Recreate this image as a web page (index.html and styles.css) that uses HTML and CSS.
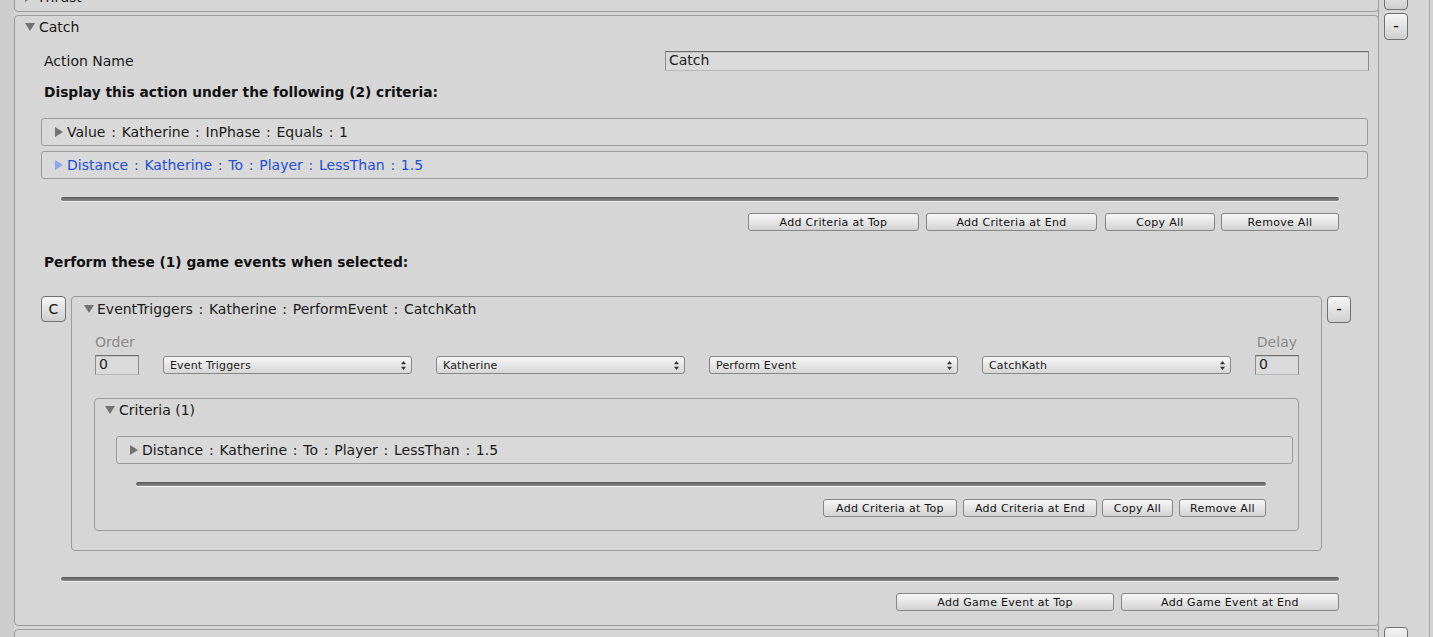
FILE: index.html
```html
<!DOCTYPE html>
<html lang="en">
<head>
<meta charset="utf-8">
<title>Catch action</title>
<link rel="stylesheet" href="styles.css">
</head>
<body>
<div class="list">

  <div class="row">
    <section class="foldout short">
      <div class="fo-head"><svg class="tri-r" width="8" height="10" viewBox="0 0 8 10"><path d="M0 0L8 5L0 10Z"/></svg><span>Thrust</span></div>
    </section>
    <div class="side"><button class="minus">&ndash;</button></div>
  </div>

  <div class="row">
    <section class="foldout">
      <div class="fo-head"><svg class="tri-d" width="10" height="8" viewBox="0 0 10 8"><path d="M0 0H10L5 8Z"/></svg><span>Catch</span></div>
      <div class="fo-body">
        <div class="field-row">
          <label class="field-label">Action Name</label>
          <div class="text-field">Catch</div>
        </div>
        <div class="heading">Display this action under the following (2) criteria:</div>
        <div class="crit-list">
          <div class="crit"><svg class="tri-r" width="8" height="10" viewBox="0 0 8 10"><path d="M0 0L8 5L0 10Z"/></svg><span class="path">Value : Katherine : InPhase : Equals : 1</span></div>
          <div class="crit selected"><svg class="tri-r" width="8" height="10" viewBox="0 0 8 10"><path d="M0 0L8 5L0 10Z"/></svg><span class="path">Distance : Katherine : To : Player : LessThan : 1.5</span></div>
        </div>
        <div class="sep"></div>
        <div class="btn-row">
          <button class="btn w-top">Add Criteria at Top</button>
          <button class="btn w-end">Add Criteria at End</button>
          <button class="btn w-copy">Copy All</button>
          <button class="btn w-remove">Remove All</button>
        </div>
        <div class="heading gap-head">Perform these (1) game events when selected:</div>

        <div class="event-row">
          <button class="sq">C</button>
          <div class="event-panel">
            <div class="ev-head"><svg class="tri-d" width="10" height="8" viewBox="0 0 10 8"><path d="M0 0H10L5 8Z"/></svg><span class="path">EventTriggers : Katherine : PerformEvent : CatchKath</span></div>
            <div class="ev-body">
              <div class="labels"><span>Order</span><span>Delay</span></div>
              <div class="fields">
                <div class="num-field">0</div>
                <div class="dropdown"><span>Event Triggers</span><svg width="5" height="9" viewBox="0 0 5 9"><path d="M2.5 0L5 3.2H0Z M0 5.8H5L2.5 9Z"/></svg></div>
                <div class="dropdown"><span>Katherine</span><svg width="5" height="9" viewBox="0 0 5 9"><path d="M2.5 0L5 3.2H0Z M0 5.8H5L2.5 9Z"/></svg></div>
                <div class="dropdown"><span>Perform Event</span><svg width="5" height="9" viewBox="0 0 5 9"><path d="M2.5 0L5 3.2H0Z M0 5.8H5L2.5 9Z"/></svg></div>
                <div class="dropdown"><span>CatchKath</span><svg width="5" height="9" viewBox="0 0 5 9"><path d="M2.5 0L5 3.2H0Z M0 5.8H5L2.5 9Z"/></svg></div>
                <div class="num-field">0</div>
              </div>
              <div class="sub-panel">
                <div class="sub-head"><svg class="tri-d" width="10" height="8" viewBox="0 0 10 8"><path d="M0 0H10L5 8Z"/></svg><span>Criteria (1)</span></div>
                <div class="sub-body">
                  <div class="crit"><svg class="tri-r" width="8" height="10" viewBox="0 0 8 10"><path d="M0 0L8 5L0 10Z"/></svg><span class="path">Distance : Katherine : To : Player : LessThan : 1.5</span></div>
                  <div class="sep sub-sep"></div>
                  <div class="btn-row sub-btns">
                    <button class="btn s-top">Add Criteria at Top</button>
                    <button class="btn s-end">Add Criteria at End</button>
                    <button class="btn s-copy">Copy All</button>
                    <button class="btn s-remove">Remove All</button>
                  </div>
                </div>
              </div>
            </div>
          </div>
          <button class="minus">&ndash;</button>
        </div>

        <div class="sep sep-low"></div>
        <div class="btn-row">
          <button class="btn w-game">Add Game Event at Top</button>
          <button class="btn w-game">Add Game Event at End</button>
        </div>
      </div>
    </section>
    <div class="side"><button class="minus">&ndash;</button></div>
  </div>

  <div class="row">
    <section class="foldout short">
      <div class="fo-head low"><svg class="tri-r" width="8" height="10" viewBox="0 0 8 10"><path d="M0 0L8 5L0 10Z"/></svg><span>Release</span></div>
    </section>
    <div class="side"><button class="minus">&ndash;</button></div>
  </div>

</div>
</body>
</html>
```

FILE: styles.css
```css
* { box-sizing: border-box; }

html, body {
  margin: 0;
  height: 100%;
}

body {
  font-family: "DejaVu Sans", Verdana, sans-serif;
  font-size: 14px;
  color: #1a1a1a;
  overflow: hidden;
  background:
    linear-gradient(to right, #cdcdcd 0 14px, transparent 14px),
    linear-gradient(to right, transparent 1378px, #9c9c9c 1378px 1379px, transparent 1379px),
    linear-gradient(to right, transparent 1429px, #a9a9a9 1429px 1430px, #d2d2d2 1430px),
    #d6d6d6;
}

.list {
  display: flex;
  flex-direction: column;
  gap: 3px;
  margin-top: -15px;
  padding-left: 14px;
}

.row {
  display: flex;
  align-items: flex-start;
}

.foldout {
  width: 1365px;
  flex: none;
  border: 1px solid #9b9b9b;
  border-radius: 4px;
  background: #d6d6d6;
}

.foldout.short { height: 27px; }

.side {
  padding-left: 5px;
  margin-top: -2px;
}

svg.tri-d, svg.tri-r { flex: none; fill: #727272; }

.fo-head {
  display: flex;
  align-items: center;
  height: 22px;
  padding-left: 10px;
  gap: 4px;
}

.fo-head.low { padding-top: 4px; height: 26px; }

.path { word-spacing: 1.3px; }

.fo-body {
  padding: 0 10px 14px 26px;
}

.field-row {
  display: flex;
  align-items: center;
  height: 20px;
  margin-top: 13px;
}

.field-label {
  width: 624px;
  flex: none;
  padding-left: 3px;
  line-height: 18px;
}

.text-field {
  flex: 1;
  height: 20px;
  line-height: 17px;
  padding-left: 3px;
  margin-right: -1px;
  background: #dadada;
  border: 1px solid;
  border-color: #6e6e6e #8d8d8d #b6b6b6 #8d8d8d;
  box-shadow: inset 0 1px 0 #c4c4c4;
}

.heading {
  margin-top: 11px;
  line-height: 20px;
  font-size: 13.75px;
  font-weight: bold;
  padding-left: 3px;
  color: #111;
}

.heading.gap-head { margin-top: 21px; }

.crit-list {
  margin-top: 16px;
  display: flex;
  flex-direction: column;
  gap: 5px;
}

.crit {
  height: 28px;
  display: flex;
  align-items: center;
  gap: 4px;
  padding-left: 13px;
  padding-bottom: 1px;
  border: 1px solid #9a9a9a;
  border-radius: 3px;
  background: #d9d9d9;
}

.crit.selected { color: #1f4fd6; }
.crit.selected svg.tri-r { fill: #8ea6e8; }

.sep {
  height: 4px;
  margin: 18px 29px 0 20px;
  border-radius: 2px;
  background: linear-gradient(#585858, #8c8c8c);
  box-shadow: 0 1px 0 #efefef;
}

.sep.sep-low { margin-top: 26px; }

.btn-row {
  display: flex;
  justify-content: flex-end;
  margin-top: 12px;
  margin-right: 29px;
}

.btn {
  height: 18px;
  padding: 1px 0 0;
  font-family: "DejaVu Sans", Verdana, sans-serif;
  font-size: 11px;
  letter-spacing: 0.3px;
  line-height: 16px;
  color: #111;
  border: 1px solid #868686;
  border-radius: 3px;
  background: linear-gradient(#f7f7f7, #d3d3d3);
  flex: none;
}

.w-top { width: 171px; }
.w-end { width: 171px; margin-left: 7px; }
.w-copy { width: 110px; margin-left: 8px; }
.w-remove { width: 118px; margin-left: 6px; }
.w-game { width: 218px; }
.w-game + .w-game { margin-left: 7px; }

.event-row {
  display: flex;
  align-items: flex-start;
  gap: 5px;
  margin-top: 24px;
  margin-right: 17px;
}

.sq, .minus {
  flex: none;
  padding: 0;
  font-family: "DejaVu Sans", Verdana, sans-serif;
  color: #111;
  border: 1px solid #6f6f6f;
  border-radius: 4px;
  background: linear-gradient(#f6f6f6, #cfcfcf);
}

.sq {
  width: 25px;
  height: 26px;
  font-size: 14px;
}

.minus {
  width: 24px;
  height: 27px;
  font-size: 11px;
  font-weight: bold;
}

.event-panel {
  flex: 1;
  border: 1px solid #9b9b9b;
  border-radius: 4px;
}

.ev-head {
  display: flex;
  align-items: center;
  gap: 3px;
  height: 24px;
  padding-left: 12px;
}

.ev-body {
  padding: 0 22px 19px 23px;
}

.labels {
  display: flex;
  justify-content: space-between;
  margin-top: 12px;
  line-height: 18px;
  color: #8a8a8a;
  padding-right: 2px;
}

.fields {
  display: flex;
  align-items: center;
  gap: 24px;
  height: 20px;
  margin-top: 4px;
}

.num-field {
  width: 44px;
  height: 20px;
  flex: none;
  line-height: 17px;
  padding-left: 3px;
  background: #dadada;
  border: 1px solid;
  border-color: #6e6e6e #8d8d8d #b6b6b6 #8d8d8d;
  box-shadow: inset 0 1px 0 #c4c4c4;
}

.dropdown {
  flex: 1;
  height: 18px;
  display: flex;
  align-items: center;
  justify-content: space-between;
  padding: 1px 5px 0 6px;
  font-size: 11px;
  letter-spacing: 0.15px;
  border: 1px solid #868686;
  border-radius: 3px;
  background: linear-gradient(#f7f7f7, #d6d6d6);
}

.dropdown svg { fill: #333; flex: none; margin-top: -1px; }

.sub-panel {
  margin-top: 23px;
  margin-left: -1px;
  border: 1px solid #9b9b9b;
  border-radius: 4px;
}

.sub-head {
  display: flex;
  align-items: center;
  gap: 4px;
  height: 22px;
  padding-left: 10px;
}

.sub-body {
  padding: 0 5px 13px 21px;
}

.sub-body .crit { margin-top: 15px; }

.sep.sub-sep { margin-right: 27px; }

.btn-row.sub-btns {
  margin-top: 13px;
  margin-right: 27px;
}

.s-top { width: 134px; }
.s-end { width: 134px; margin-left: 6px; }
.s-copy { width: 71px; margin-left: 5px; }
.s-remove { width: 87px; margin-left: 6px; }
```
